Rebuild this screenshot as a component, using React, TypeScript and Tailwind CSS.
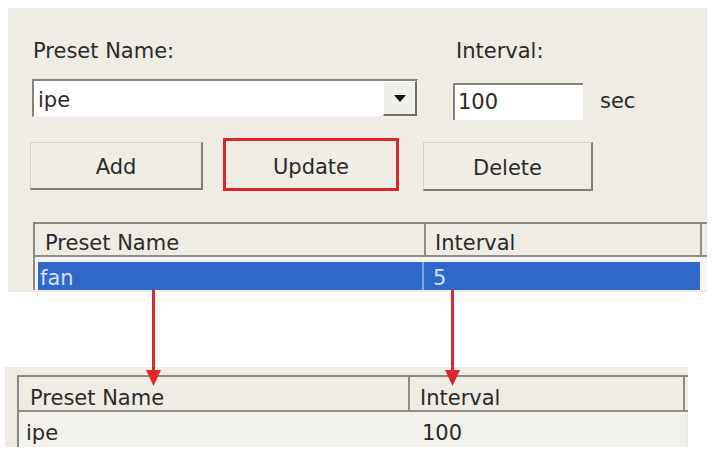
import React from "react";

function Btn({ label, w, h, mt }: { label: string; w: string; h: string; mt: string }) {
  return (
    <div
      className={`${w} ${h} ${mt} flex items-center justify-center pt-[3px] bg-[#efede6] border-t border-l border-[#d2d0c9] border-r-2 border-b-2 border-r-[#7f7d77] border-b-[#7f7d77]`}
    >
      <span className="leading-[24px]">{label}</span>
    </div>
  );
}

export default function App() {
  return (
    <div className="relative w-[712px] h-[454px] bg-white overflow-hidden font-['DejaVu_Sans',sans-serif] text-[21px] text-[#2a2a2a]">
      {/* Top dialog panel */}
      <div className="ml-[8px] mt-[8px] w-[699px] h-[284px] bg-[#eeece4] overflow-hidden pt-[31px] pl-[22px]">
        {/* Labels */}
        <div className="flex h-[24px] leading-[24px]">
          <div className="w-[426px] pl-[3px]">Preset Name:</div>
          <div>Interval:</div>
        </div>

        {/* Inputs */}
        <div className="flex items-start mt-[16px] pl-[2px]">
          <div className="w-[386px] h-[38px] flex bg-white border-t-2 border-l-2 border-[#858379] border-b border-r border-b-[#f4f3ee] border-r-[#f4f3ee]">
            <div className="flex-1 pl-[4px] pt-[7px] leading-[24px]">ipe</div>
            <div className="w-[34px] h-[35px] flex items-center justify-center bg-[#f1efe9] border-t border-l border-white border-r-2 border-b-2 border-r-[#6f6d68] border-b-[#6f6d68]">
              <svg width="12" height="7" viewBox="0 0 12 7">
                <polygon points="0,0 12,0 6,7" fill="#111" />
              </svg>
            </div>
          </div>
          <div className="ml-[35px] mt-[4px] w-[130px] h-[37px] bg-white border-t-2 border-l-2 border-[#858379] pl-[3px] pt-[5px] leading-[24px]">
            100
          </div>
          <div className="ml-[17px] mt-[10px] leading-[24px]">sec</div>
        </div>

        {/* Buttons */}
        <div className="flex items-start mt-[18px]">
          <Btn label="Add" w="w-[173px]" h="h-[48px]" mt="mt-[4px]" />
          <div className="ml-[20px] w-[176px] h-[53px] flex items-center justify-center pt-[5px] bg-[#efede6] border-[3px] border-[#d8262b]">
            <span className="leading-[24px]">Update</span>
          </div>
          <div className="ml-[24px]">
            <Btn label="Delete" w="w-[170px]" h="h-[49px]" mt="mt-[4px]" />
          </div>
        </div>

        {/* List view */}
        <div className="mt-[31px] ml-[3px] w-[700px] border-t-2 border-l-2 border-[#8a8880] bg-[#f6f5f1]">
          <div className="flex h-[33px] bg-[#eeece4] border-b-2 border-[#8f8d86]">
            <div className="w-[391px] pl-[10px] pt-[7px] leading-[24px] border-r-2 border-[#8f8d86]">Preset Name</div>
            <div className="w-[276px] pl-[9px] pt-[7px] leading-[24px] border-r-2 border-[#8f8d86]">Interval</div>
            <div className="flex-1" />
          </div>
          <div className="h-[5px]" />
          <div className="flex ml-[3px] w-[662px] h-[28px] bg-[#2f68c9] text-[#d3e2ff]">
            <div className="w-[386px] pl-[2px] pt-[4px] leading-[24px] border-r-2 border-[#7fa3e0]">fan</div>
            <div className="pl-[9px] pt-[4px] leading-[24px]">5</div>
          </div>
        </div>
      </div>

      {/* Bottom list panel */}
      <div className="ml-[5px] mt-[75px] w-[683px] h-[80px] bg-[#eeece4] pt-[8px] pl-[12px] overflow-hidden">
        <div className="w-[671px] border-t-2 border-l-2 border-[#8a8880]">
          <div className="flex h-[35px] border-b-2 border-[#8f8d86]">
            <div className="w-[391px] pl-[11px] pt-[9px] leading-[24px] border-r-2 border-[#8f8d86]">Preset Name</div>
            <div className="w-[275px] pl-[10px] pt-[9px] leading-[24px] border-r-2 border-[#8f8d86]">Interval</div>
            <div className="flex-1" />
          </div>
          <div className="flex h-[35px] w-[666px] bg-[#f2f1eb]">
            <div className="w-[391px] pl-[7px] pt-[9px] leading-[24px]">ipe</div>
            <div className="pl-[12px] pt-[9px] leading-[24px]">100</div>
          </div>
        </div>
      </div>

      {/* Red arrows */}
      <svg className="absolute left-0 top-0 pointer-events-none" width="712" height="454" viewBox="0 0 712 454">
        <line x1="153.5" y1="290" x2="153.5" y2="374" stroke="#e0262a" strokeWidth="3" />
        <polygon points="146,370 161,370 153.5,386" fill="#e0262a" />
        <line x1="452.5" y1="290" x2="452.5" y2="374" stroke="#e0262a" strokeWidth="3" />
        <polygon points="445,370 460,370 452.5,386" fill="#e0262a" />
      </svg>
    </div>
  );
}
